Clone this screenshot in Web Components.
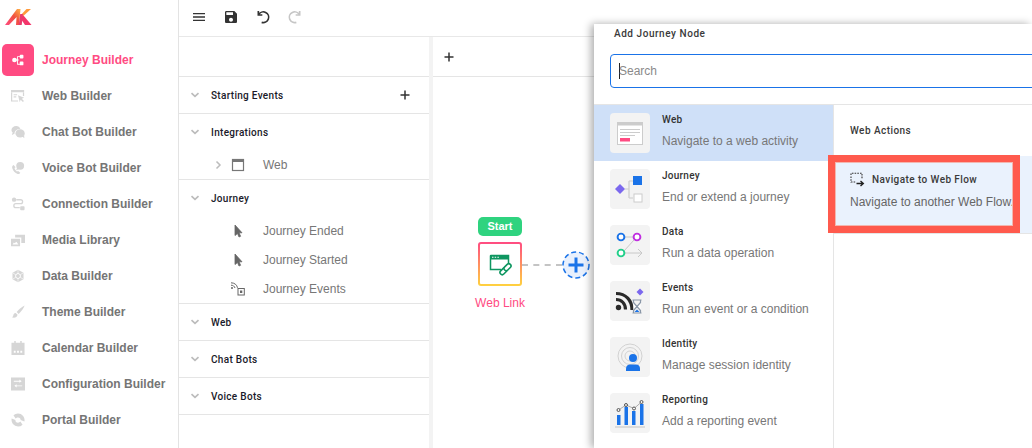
<!DOCTYPE html>
<html lang="en">
<head>
<meta charset="utf-8">
<title>Journey Builder</title>
<style>
html,body{margin:0;padding:0;background:#fff;}
body{width:1032px;height:448px;overflow:hidden;font-family:"Liberation Sans",Arial,sans-serif;}
svg{display:block}
</style>
</head>
<body>
<template id="t-shell"><style>
:host{display:grid;grid-template-columns:179px 1fr;width:1032px;height:448px;position:relative;overflow:hidden;background:#fff}
.main{display:flex;flex-direction:column;min-width:0;height:448px}
.work{display:flex;flex:1;min-height:0}
</style><slot name="nav"></slot><div class="main"><slot name="bar"></slot><div class="work"><slot name="tree"></slot><slot name="canvas"></slot></div></div><slot name="overlay"></slot></template>

<template id="t-nav"><style>
:host{display:block;border-right:1px solid #e3e3e3;box-sizing:border-box;height:448px}
.logo{height:42px;padding:9px 0 0 5px;box-sizing:border-box}
</style><div class="logo"><slot name="logo"></slot></div><slot></slot></template>

<template id="t-navitem"><style>
:host{display:flex;align-items:center;height:36px;font:700 12px "Liberation Sans",Arial,sans-serif;color:#757575}
.ic{width:32px;height:32px;margin:0 8px 0 2px;border-radius:5px;display:flex;align-items:center;justify-content:center;color:#d6d6d6;flex:none}
::slotted(svg){width:14px;height:14px}
:host([active]){color:#ff4b82}
:host([active]) .ic{background:#ff4b82;color:#fff}
</style><span class="ic"><slot name="icon"></slot></span><span><slot></slot></span></template>

<template id="t-bar"><style>
:host{display:flex;align-items:center;height:37px;border-bottom:1px solid #e8e8e8;padding:0 0 3px 12px;gap:16px;flex:none;box-sizing:border-box}
</style><slot></slot></template>

<template id="t-tree"><style>
:host{display:block;width:250px;flex:none;border-right:4px solid #f3f3f3;box-sizing:content-box}
.top{height:39px;border-bottom:1px solid #e5e5e5}
</style><div class="top"></div><slot></slot></template>

<template id="t-section"><style>
:host{display:block;border-bottom:1px solid #e5e5e5;color:#1a1a2a}
.h{display:flex;align-items:center;height:36px;padding-left:11px;font:500 10px "Roboto","Liberation Sans",sans-serif;letter-spacing:.3px;box-sizing:border-box;position:relative}
.c{width:10px;color:#bcbcbc;margin-right:11px}
.t{flex:1}
.a{margin-right:19px;color:#333}
</style><div class="h"><svg class="c" width="10" height="10" viewBox="0 0 10 10"><path d="M1.500 3.200 5 6.400l3.500-3.200" fill="none" stroke="currentColor" stroke-width="1.700"/></svg><span class="t"></span><span class="a"><slot name="action"></slot></span></div><slot></slot></template>

<template id="t-row"><style>
:host{display:flex;align-items:center;height:29px;font:400 12px "Liberation Sans",Arial,sans-serif;color:#777}
.ar{width:10px;margin-left:34px;color:#bcbcbc;flex:none;height:10px}
.ic{width:16px;height:16px;margin:0 17px 0 7px;color:#666;flex:none}
</style><span class="ar"><slot name="arrow"></slot></span><span class="ic"><slot name="icon"></slot></span><span><slot></slot></span></template>

<template id="t-canvas"><style>
:host{display:block;flex:1;position:relative;min-width:0}
.top{height:39px;border-bottom:1px solid #e5e5e5;display:flex;align-items:center;padding-left:11px;color:#333}
</style><div class="top"><svg width="10" height="10" viewBox="0 0 10 10"><path d="M5 .5v9M.5 5h9" stroke="currentColor" stroke-width="1.500"/></svg></div><slot></slot></template>

<template id="t-node"><style>
:host{position:absolute;left:45px;top:180px;width:44px;display:block;text-align:center}
.pill{height:19px;background:#2fd37f;border-radius:5px;color:#fff;font:700 11px/19px "Liberation Sans",Arial,sans-serif}
.box{margin-top:6px;width:44px;height:44px;box-sizing:border-box;border:2px solid transparent;border-radius:3px;background:linear-gradient(#fff,#fff) padding-box,linear-gradient(#ff4b82,#ffd23f) border-box;display:flex;align-items:center;justify-content:center}
.lab{margin:10px -10px 0;color:#ff4b82;font:400 12px/14px "Liberation Sans",Arial,sans-serif;white-space:nowrap}
</style><div class="pill">Start</div><div class="box"><slot></slot></div><div class="lab">Web Link</div></template>

<template id="t-add"><style>
:host{position:absolute;left:89px;top:214px;display:flex;align-items:center}
.l{width:40px;border-top:2px dashed #c4c4c4;box-sizing:border-box}
</style><div class="l"></div><svg width="28" height="28" viewBox="0 0 28 28"><circle cx="14" cy="14" r="13" fill="#e8f0fd" stroke="#1a73e8" stroke-width="1.500" stroke-dasharray="5 3"/><path d="M14 6.500v15M6.500 14h15" stroke="#1a73e8" stroke-width="3"/></svg></template>

<template id="t-modal"><style>
:host{position:absolute;left:594px;top:24px;width:438px;height:424px;background:#fff;box-shadow:-3px 0 8px rgba(0,0,0,.32);display:block;overflow:hidden;color:#333}
.title{font:500 10px/12px "Roboto","Liberation Sans",sans-serif;letter-spacing:.55px;padding:4px 0 0 20px;height:30px;box-sizing:border-box;color:#3a3a3a}
.s{margin-left:16px;width:460px;height:34px;box-sizing:border-box;border:1px solid #1a73e8;border-radius:4px;display:flex;align-items:center;padding-left:8px;font:400 12px "Liberation Sans",Arial,sans-serif;color:#8a8a8a}
.caret{width:1px;height:16px;background:#222;margin-right:-1px}
.body{margin-top:16px;border-top:1px solid #e5e5e5;display:flex;height:343px}
.l{width:240px;border-right:1px solid #e5e5e5;box-sizing:border-box;flex:none}
.r{flex:1;min-width:0}
</style><div class="title">Add Journey Node</div><div class="s"><span class="caret"></span><span>Search</span></div><div class="body"><div class="l"><slot name="list"></slot></div><div class="r"><slot name="actions"></slot></div></div></template>

<template id="t-opt"><style>
:host{display:flex;height:56px;box-sizing:border-box;padding:8px 0 0 16px}
:host([sel]){background:#cfe0f8}
.tile{width:40px;height:40px;border-radius:4px;background:#f3f3f3;flex:none;margin-right:12px}
b{display:block;font:500 10px/12px "Roboto","Liberation Sans",sans-serif;color:#333;letter-spacing:.25px;margin-top:1px}
span{display:block;font:400 12px/14px "Liberation Sans",Arial,sans-serif;color:#777;margin-top:8px;white-space:nowrap}
</style><div class="tile"><slot name="icon"></slot></div><div><b></b><span></span></div></template>

<template id="t-actions"><style>
:host{display:block}
.h{height:51px;display:flex;align-items:center;padding-left:16px;font:500 10px "Roboto","Liberation Sans",sans-serif;letter-spacing:.45px;color:#3a3a3a}
.card{height:78px;background:#eaf2fd;border-bottom:1px solid #e5e5e5;padding:16px 0 0 16px;box-sizing:border-box}
.t{display:flex;align-items:center;font:500 10px/14px "Roboto","Liberation Sans",sans-serif;letter-spacing:.42px;color:#3a3a3a}
.t svg{margin-right:7px}
.d{font:400 12px/14px "Liberation Sans",Arial,sans-serif;color:#666;margin-top:8px;white-space:nowrap}
</style><div class="h">Web Actions</div><div class="card"><div class="t"><svg width="15" height="15" viewBox="0 0 15 15"><path d="M1 3V1.200h11V7M1 4.500v5.500h5" fill="none" stroke="#333" stroke-width="1.100" stroke-dasharray="1.600 1.100"/><path d="M6.500 11.500h6M10.500 9l2.800 2.500-2.800 2.500" fill="none" stroke="#222" stroke-width="1.400"/></svg>Navigate to Web Flow</div><div class="d">Navigate to another Web Flow.</div></div></template>

<template id="t-mark"><style>
:host{position:absolute;left:828px;top:155px;width:192px;height:78px;box-sizing:border-box;border:7px solid #ff5a4d;display:block;box-shadow:inset 0 0 0 1px #f3b7b0;pointer-events:none}
</style></template>

<app-shell>
  <side-nav slot="nav">
    <svg slot="logo" width="28" height="18" viewBox="0 0 28 18"><defs><linearGradient id="lg" x1="0" y1="1" x2="1" y2="0"><stop offset="0" stop-color="#ff4b82"/><stop offset=".55" stop-color="#f0503f"/><stop offset="1" stop-color="#ffb347"/></linearGradient></defs><path d="M0 16 12 0h3.500l-1.500 16h-3l.6-8L4 16z" fill="url(#lg)"/><path d="M15.500 9.500 26 0h-4.500l-7 7.500z" fill="#ff9a3c"/><path d="M15 8.500 20 16h6.500l-8-9.500z" fill="#f3366b"/><path d="M15.200 5h2.800l-1.300 11h-3z" fill="#e93a6c"/></svg>

    <nav-item active><svg slot="icon" viewBox="0 0 16 16" fill="currentColor"><circle cx="4" cy="8" r="2.700"/><rect x="10" y="2" width="4.200" height="4.200" rx="1"/><rect x="10" y="9.800" width="4.200" height="4.200" rx="1"/><path d="M4 7.400h3V3.600h3.500v1H8v2.800h.8v1.200H8v3.800h2.500v1H7V8.600H4z"/></svg>Journey Builder</nav-item>
    <nav-item><svg slot="icon" viewBox="0 0 16 16" fill="currentColor"><path d="M0 1h15v2.600H0zM0 4h1.400v9H8v1.300H0zM13.600 4H15v4h-1.400z"/><path d="M3 6h4v1.200H3zM3 8.400h3v1.200H3z"/><path d="M8 7l7 3-2.600 1 2.400 2.600-1.200 1.200L11 12.400 10 15z"/></svg>Web Builder</nav-item>
    <nav-item><svg slot="icon" viewBox="0 0 16 16" fill="currentColor"><path d="M6 1C2.900 1 .5 3 .5 5.600c0 1.200.5 2.300 1.400 3.100L1 11.400l3-1.400C4 6.800 6.600 4.600 10.800 4.400 10 2.400 8.200 1 6 1z"/><ellipse cx="10.400" cy="9.600" rx="5.300" ry="4.700"/><path d="M13 13l2.200 2.200-.2-4z"/></svg>Chat Bot Builder</nav-item>
    <nav-item><svg slot="icon" viewBox="0 0 16 16" fill="currentColor"><path d="M3 4.500C1.700 5.200 1 6.400 1.400 8c.8 3 3.300 5.800 6.200 6.800 1.100.4 2.600-.3 3-1.500l-2.500-2-1.300.7C5.500 11.100 4.400 9.700 4 8l1.200-1z"/><circle cx="10.500" cy="5.500" r="4.500"/><path d="M7 8l-1.200 2.500L9 9.300z"/></svg>Voice Bot Builder</nav-item>
    <nav-item><svg slot="icon" viewBox="0 0 16 16" fill="currentColor"><circle cx="3.500" cy="3" r="2.500"/><rect x="10.500" y="10.500" width="5" height="4.500" rx="1"/><path d="M6 2.400h5a3 3 0 0 1 0 6H5.500a1.500 1.500 0 0 0 0 3H10v1.500H5.500a3 3 0 0 1 0-6H11a1.500 1.500 0 0 0 0-3H6z"/></svg>Connection Builder</nav-item>
    <nav-item><svg slot="icon" viewBox="0 0 17 15" fill="currentColor"><path d="M0 6h11v9H0zM2 13h7L6.500 9.500 4.500 11.500 3.500 10.500z" fill-rule="evenodd"/><path d="M5 1h12v10h-4.500V4.500H5z"/></svg>Media Library</nav-item>
    <nav-item><svg slot="icon" viewBox="0 0 16 16" fill="none" stroke="currentColor"><path d="M8 .8l6.300 3.600v7.200L8 15.200l-6.300-3.600V4.400z" fill="currentColor" stroke="none"/><path d="M8 5l2.600 1.500v3L8 11l-2.600-1.500v-3z" stroke="#fff" stroke-width="1.100"/><path d="M8 1v4M14 4.500l-3.400 2M14 11.500l-3.400-2M8 15v-4M2 11.500l3.400-2M2 4.500l3.400 2" stroke="#fff" stroke-width=".7"/></svg>Data Builder</nav-item>
    <nav-item><svg slot="icon" viewBox="0 0 16 16" fill="currentColor"><path d="M15.500.5c-3 1.400-6.500 4.400-9 7.500l2.300 2.200C11.500 7.500 14.500 4 15.500.5z"/><path d="M5.300 9c-2 .3-2.500 1.700-2.800 3.200-.2.900-.7 1.400-1.500 1.800 2.500 1 6 .5 6.500-2.800z"/></svg>Theme Builder</nav-item>
    <nav-item><svg slot="icon" viewBox="0 0 14 15" fill="currentColor"><path d="M3 0h1.600v2h4.800V0H11v2h3v13H0V2h3zM2.500 10.500v2h2v-2zM6 10.500v2h2v-2zM9.500 10.500v2h2v-2z" fill-rule="evenodd"/></svg>Calendar Builder</nav-item>
    <nav-item><svg slot="icon" viewBox="0 0 15 14" fill="currentColor"><path d="M0 0h15v14H0zM3 3.500v1h6v1.200l2.400-1.700L9 2.300v1.200zM12 8.500H6V7.300L3.600 9 6 10.700V9.500h6z" fill-rule="evenodd"/></svg>Configuration Builder</nav-item>
    <nav-item><svg slot="icon" viewBox="0 0 16 16" fill="currentColor"><path d="M8 .5a7.500 7.500 0 0 1 7.300 9.200L11 8a3 3 0 0 0-3-3C6.800 5 6 5.500 5.300 6.300L2.800 2.600A7.500 7.500 0 0 1 8 .5z"/><path d="M8 15.500A7.500 7.500 0 0 1 .8 6.300L5 8a3 3 0 0 0 3 3c1.200 0 2-.5 2.700-1.300l2.500 3.700A7.500 7.500 0 0 1 8 15.500z"/></svg>Portal Builder</nav-item>
  </side-nav>

  <tool-bar slot="bar">
    <svg width="16" height="16" viewBox="0 0 24 24" fill="#333"><path d="M3 18h18v-2H3v2zm0-5h18v-2H3v2zm0-7v2h18V6H3z"/></svg>
    <svg width="16" height="16" viewBox="0 0 24 24" fill="#333"><path d="M17 3H5c-1.110 0-2 .9-2 2v14c0 1.100.89 2 2 2h14c1.100 0 2-.9 2-2V7l-4-4zm-5 16c-1.660 0-3-1.340-3-3s1.340-3 3-3 3 1.340 3 3-1.340 3-3 3zm3-10H5V5h10v4z"/></svg>
    <svg width="16" height="16" viewBox="0 0 24 24" fill="none" stroke="#333" stroke-width="2.500"><path d="M5.500 8.500A8 8 0 1 1 10 20"/><path d="M5 3v6h6"/></svg>
    <svg width="16" height="16" viewBox="0 0 24 24" fill="none" stroke="#c6c6c6" stroke-width="2.500"><path d="M18.500 8.500A8 8 0 1 0 14 20"/><path d="M19 3v6h-6"/></svg>
  </tool-bar>

  <tree-panel slot="tree">
    <tree-section label="Starting Events"><svg slot="action" width="10" height="10" viewBox="0 0 10 10" style="display:block"><path d="M5 .5v9M.5 5h9" stroke="#333" stroke-width="1.500"/></svg></tree-section>
    <tree-section label="Integrations">
      <tree-row><svg slot="arrow" width="10" height="10" viewBox="0 0 10 10"><path d="M3.500 1.500 7 5 3.500 8.500" fill="none" stroke="currentColor" stroke-width="1.500"/></svg><svg slot="icon" width="14" height="14" viewBox="0 0 14 14" style="margin:1px"><rect x="1.500" y="1.500" width="11" height="11" fill="none" stroke="#777" stroke-width="1.200"/><rect x="1" y="1" width="12" height="3" fill="#777"/></svg>Web</tree-row>
    </tree-section>
    <tree-section label="Journey">
      <tree-row><svg slot="icon" width="12" height="14" viewBox="0 0 12 14" style="margin:1px 2px"><path d="M3 1v10.500l2.500-2 1.500 3.500 1.600-.7L7 8.800h3z" fill="#666" stroke="#666" stroke-width=".8"/></svg>Journey Ended</tree-row>
      <tree-row><svg slot="icon" width="12" height="14" viewBox="0 0 12 14" style="margin:1px 2px"><path d="M3 1v10.500l2.500-2 1.500 3.500 1.600-.7L7 8.800h3z" fill="#666" stroke="#666" stroke-width=".8"/></svg>Journey Started</tree-row>
      <tree-row><svg slot="icon" width="14" height="14" viewBox="0 0 14 14" style="margin:1px"><path d="M0 .8c3.500 0 6 2 6.500 5M0 3.200c2 0 3.500 1 4 2.800" fill="none" stroke="#666" stroke-width="1"/><circle cx="1" cy="6" r="1" fill="#666"/><rect x="7" y="6.500" width="6.300" height="6.500" fill="none" stroke="#666"/><rect x="9" y="8.500" width="2.300" height="2.500" fill="#666"/></svg>Journey Events</tree-row>
    </tree-section>
    <tree-section label="Web"></tree-section>
    <tree-section label="Chat Bots"></tree-section>
    <tree-section label="Voice Bots"></tree-section>
  </tree-panel>

  <flow-canvas slot="canvas">
    <start-node><svg width="24" height="24" viewBox="0 0 24 24"><path d="M2.500 3.500h18v8M13 17.500H2.500v-14" fill="#fff" stroke="#0e9660" stroke-width="1.500"/><rect x="2" y="3" width="19" height="4.500" fill="#0e9660"/><path d="M4 5.200h1.500M6.700 5.200h1.500M9.400 5.200h1.500" stroke="#fff" stroke-width="1.100"/><g fill="#fff" stroke="#0e9660" stroke-width="1.600"><rect x="11.500" y="17" width="8" height="4.400" rx="2.200" transform="rotate(-45 15.500 19.200)"/><rect x="15.500" y="13" width="8" height="4.400" rx="2.200" transform="rotate(-45 19.500 15.200)"/></g></svg></start-node>
    <add-link></add-link>
  </flow-canvas>

  <node-modal slot="overlay">
    <node-option slot="list" sel title-text="Web" desc="Navigate to a web activity"><svg slot="icon" width="40" height="40" viewBox="0 0 40 40"><rect x="7.500" y="9.500" width="25" height="22" fill="#fff" stroke="#ccc"/><rect x="7" y="9" width="26" height="3.500" fill="#ccc"/><path d="M10 16.500h20M10 19.500h20M10 22.500h15" stroke="#ccc"/><rect x="10" y="25" width="10" height="3.500" fill="#ff4b82"/></svg></node-option>
    <node-option slot="list" title-text="Journey" desc="End or extend a journey"><svg slot="icon" width="40" height="40" viewBox="0 0 40 40"><path d="M15 20h4M19 12v17M19 12h4M19 29h4" fill="none" stroke="#ccc" stroke-width="1.200"/><path d="M10 15l5 5-5 5-5-5z" fill="#7b68ee"/><rect x="23" y="7" width="9" height="9" fill="#1a73e8"/><rect x="24" y="25" width="8" height="8" fill="#fff" stroke="#ccc"/></svg></node-option>
    <node-option slot="list" title-text="Data" desc="Run a data operation"><svg slot="icon" width="40" height="40" viewBox="0 0 40 40"><path d="M15 12h8M24 15 14 26M15 28h17M28 24l4 4-4 4" fill="none" stroke="#c8c8c8"/><circle cx="11" cy="12" r="3.400" fill="#fff" stroke="#1a73e8" stroke-width="1.900"/><circle cx="27" cy="12" r="3.400" fill="#fff" stroke="#c02ee0" stroke-width="1.900"/><circle cx="11" cy="28" r="3.400" fill="#fff" stroke="#22d08a" stroke-width="1.900"/></svg></node-option>
    <node-option slot="list" title-text="Events" desc="Run an event or a condition"><svg slot="icon" width="40" height="40" viewBox="0 0 40 40"><circle cx="8.500" cy="26.500" r="2.700" fill="#2a2a2a"/><path d="M6 18.500c5.500 0 9.500 4 9.500 10M6 12.500c10 0 16 7 16 16.500" fill="none" stroke="#2a2a2a" stroke-width="3.200"/><path d="M30 7.500l3.500 3.500-3.500 3.500-3.500-3.500z" fill="#7b68ee"/><path d="M22.500 19h9M22.500 32h9M23.500 19v2.500L27 25.500l-3.500 4V32M30.500 19v2.500L27 25.500l3.500 4V32" fill="#fff" stroke="#8a97a8" stroke-width="1.200"/><path d="M24.500 31h5l-2.500-2.500z" fill="#1a73e8"/></svg></node-option>
    <node-option slot="list" title-text="Identity" desc="Manage session identity"><svg slot="icon" width="40" height="40" viewBox="0 0 40 40"><g fill="none" stroke="#d2d2d2"><circle cx="20" cy="19" r="12"/><circle cx="20" cy="19" r="8.500"/><circle cx="20" cy="19" r="5"/></g><circle cx="23" cy="21" r="4" fill="#1a73e8"/><path d="M16 34v-2.500c0-2.500 2-4 4-4h6c2.300 0 4 1.500 4 4V34z" fill="#1a73e8"/></svg></node-option>
    <node-option slot="list" title-text="Reporting" desc="Add a reporting event"><svg slot="icon" width="40" height="40" viewBox="0 0 40 40"><path d="M8.500 17 16 12l8 3.500 7.500-6.500" fill="none" stroke="#999" stroke-width=".8"/><g fill="#1a73e8"><rect x="7" y="22" width="3.500" height="10"/><rect x="14.500" y="14" width="3.500" height="18"/><rect x="22" y="18" width="3.500" height="14"/><rect x="30" y="11" width="3.500" height="21"/></g><path d="M5 34h30" stroke="#ccc" stroke-width="1.200"/><g fill="#f3f3f3" stroke="#555" stroke-width="1"><circle cx="8.500" cy="17" r="1.500"/><circle cx="16" cy="12" r="1.500"/><circle cx="24" cy="15.500" r="1.500"/><circle cx="31.500" cy="9" r="1.500"/></g></svg></node-option>
    <action-list slot="actions"></action-list>
  </node-modal>
  <mark-box slot="overlay"></mark-box>
</app-shell>

<script>
function def(tag, tid, setup){
  customElements.define(tag, class extends HTMLElement{
    constructor(){
      super();
      const r=this.attachShadow({mode:'open'});
      r.appendChild(document.getElementById(tid).content.cloneNode(true));
    }
    connectedCallback(){ if(setup) setup(this, this.shadowRoot); }
  });
}
def('app-shell','t-shell');
def('side-nav','t-nav');
def('nav-item','t-navitem');
def('tool-bar','t-bar');
def('tree-panel','t-tree');
def('tree-section','t-section',(h,r)=>{r.querySelector('.t').textContent=h.getAttribute('label');});
def('tree-row','t-row');
def('flow-canvas','t-canvas');
def('start-node','t-node');
def('add-link','t-add');
def('node-modal','t-modal');
def('node-option','t-opt',(h,r)=>{r.querySelector('b').textContent=h.getAttribute('title-text');r.querySelector('span').textContent=h.getAttribute('desc');});
def('action-list','t-actions');
def('mark-box','t-mark');
</script>
</body>
</html>
